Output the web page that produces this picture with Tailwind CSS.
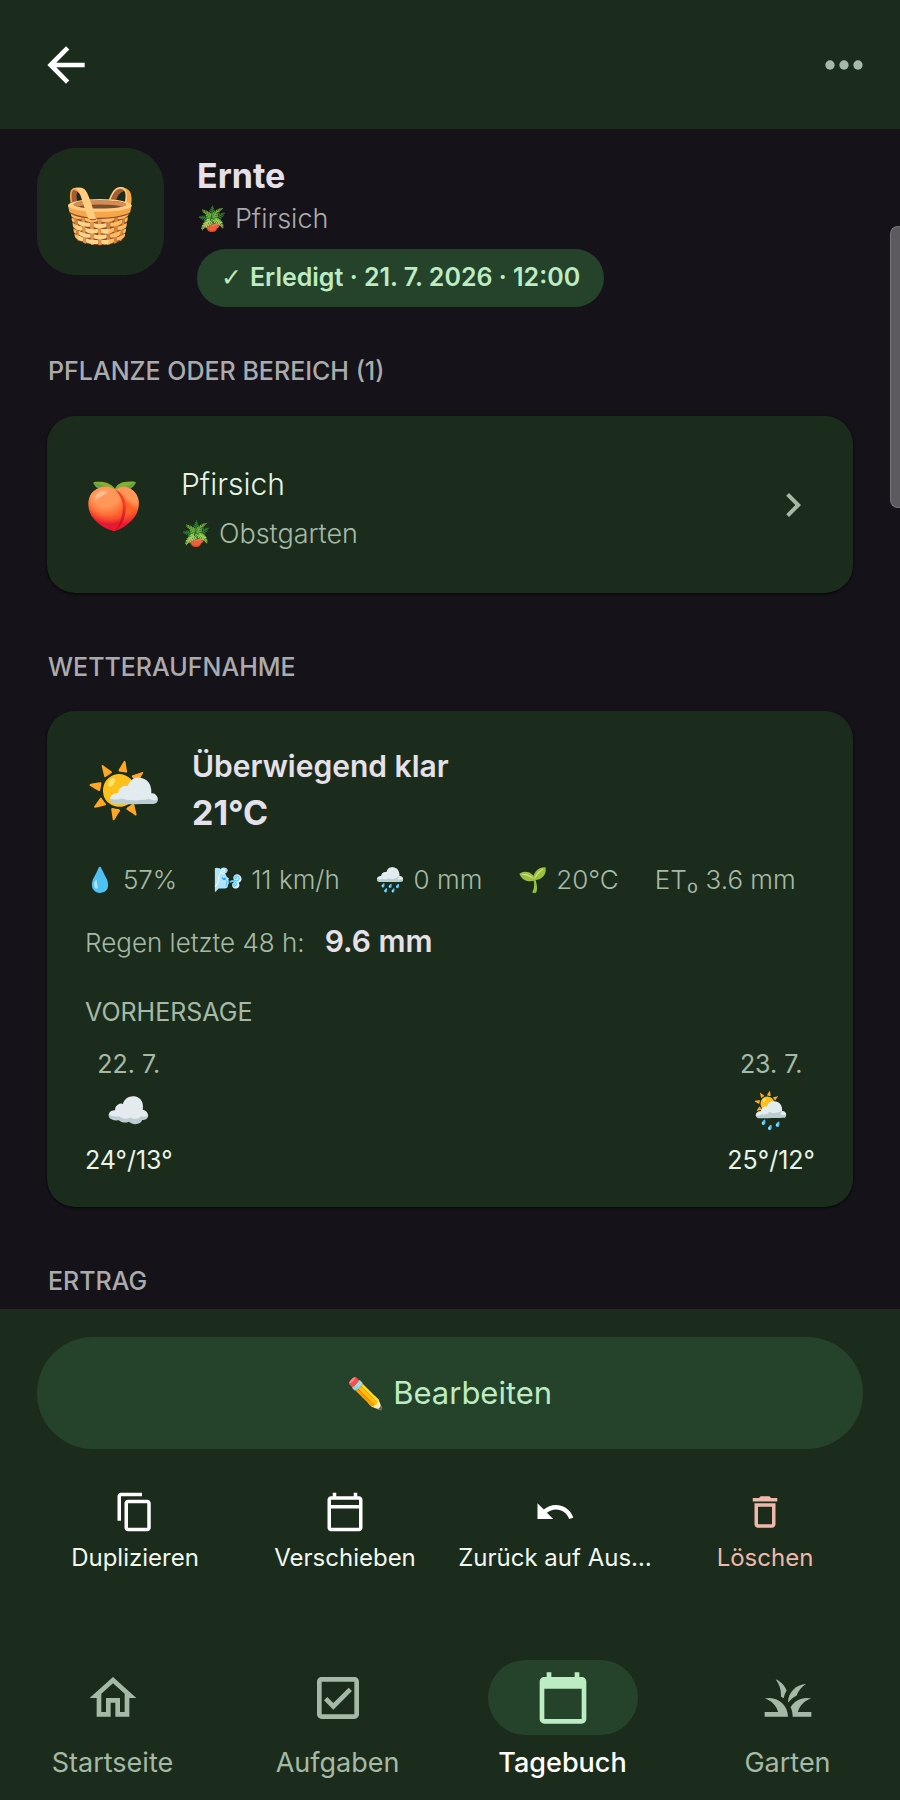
<!DOCTYPE html>
<html lang="de">
<head>
<meta charset="utf-8">
<meta name="viewport" content="width=device-width, initial-scale=1">
<title>Ernte – Pfirsich</title>
<script src="https://cdn.jsdelivr.net/npm/@tailwindcss/browser@4"></script>
</head>
<body class="flex h-screen flex-col overflow-hidden bg-[#16121a] font-['Inter','Noto_Color_Emoji',sans-serif] text-[#e7f3e7]">

<header class="flex h-[129px] shrink-0 items-center justify-between bg-[#1c2c1c] pl-[38px] pr-7">
  <button aria-label="Zurück" class="text-white"><svg class="size-14" viewBox="0 0 24 24" fill="currentColor"><path d="M20 11H7.83l5.59-5.59L12 4l-8 8 8 8 1.41-1.41L7.83 13H20v-2z"/></svg></button>
  <button aria-label="Mehr" class="text-[#a5baa6]"><svg class="size-14" viewBox="0 0 24 24" fill="currentColor"><circle cx="6" cy="12" r="2"/><circle cx="12" cy="12" r="2"/><circle cx="18" cy="12" r="2"/></svg></button>
</header>

<main class="relative min-h-0 flex-1 overflow-hidden">
  <div class="absolute right-0 top-[97px] h-[282px] w-[10px] rounded-l-lg border border-r-0 border-[#77757a] bg-[#5c5a5f]"></div>

  <section class="flex gap-[33px] px-[37px] pt-[19px]">
    <div class="flex size-[127px] shrink-0 items-center justify-center rounded-[38px] bg-[#1c2c1c] text-[58px] leading-none">🧺</div>
    <div class="flex flex-col items-start pt-1">
      <h1 class="text-[34px] font-bold leading-[48px] text-[#e6e0e9]">Ernte</h1>
      <p class="flex items-center gap-2 text-[27px] font-light leading-[38px] text-[#a9abac]"><span class="text-[24px]">🪴</span>Pfirsich</p>
      <p class="mt-[11px] flex h-[58px] items-center gap-2 rounded-full bg-[#25432b] px-6 text-[25px] font-semibold text-[#bdecc2]"><span class="font-['DejaVu_Sans',sans-serif]">✓</span>Erledigt · 21. 7. 2026 · 12:00</p>
    </div>
  </section>

  <section class="px-[47px] pt-[46px]">
    <h2 class="px-px text-[25px] font-medium leading-9 text-[#a9abac]">PFLANZE ODER BEREICH (1)</h2>
    <a href="#" class="mt-[27px] flex h-[177px] items-center rounded-[28px] bg-[#1c2c1c] pl-[38px] pr-9 shadow-sm shadow-black/60">
      <span class="w-24 text-[46px] leading-none">🍑</span>
      <span class="flex flex-1 flex-col pt-2">
        <span class="text-[30px] font-light leading-[50px]">Pfirsich</span>
        <span class="flex items-center gap-2 text-[27px] font-light leading-[50px] text-[#a5baa6]"><span class="text-[24px]">🪴</span>Obstgarten</span>
      </span>
      <svg class="size-12 text-[#a5baa6]" viewBox="0 0 24 24" fill="currentColor"><path d="M10 6L8.59 7.41 13.17 12l-4.58 4.59L10 18l6-6z"/></svg>
    </a>
  </section>

  <section class="px-[47px] pt-14">
    <h2 class="px-px text-[25px] font-medium leading-9 text-[#a9abac]">WETTERAUFNAHME</h2>
    <div class="mt-[26px] flex flex-col rounded-[28px] bg-[#1c2c1c] px-[38px] pb-[27px] pt-8 shadow-sm shadow-black/60">
      <div class="flex items-center">
        <span class="w-[107px] text-[62px] leading-none">🌤️</span>
        <div class="text-[#e6e0e9]">
          <p class="text-[30px] font-semibold leading-[46px]">Überwiegend klar</p>
          <p class="text-[34px] font-bold leading-[48px]">21°C</p>
        </div>
      </div>
      <ul class="mt-[21px] flex gap-9 text-[26px] font-light leading-[44px] text-[#a5baa6]">
        <li class="flex gap-2"><span class="text-[24px]">💧</span>57%</li>
        <li class="flex gap-2"><span class="text-[24px]">🌬️</span>11 km/h</li>
        <li class="flex gap-2"><span class="text-[24px]">🌧️</span>0 mm</li>
        <li class="flex gap-2"><span class="text-[24px]">🌱</span>20°C</li>
        <li>ET₀ 3.6 mm</li>
      </ul>
      <p class="mt-[17px] flex items-baseline gap-5 text-[26px] font-light leading-[44px] text-[#a5baa6]">Regen letzte 48 h: <strong class="text-[30px] font-semibold text-[#e6e0e9]">9.6 mm</strong></p>
      <h3 class="mt-[27px] text-[25px] leading-[40px] text-[#a5baa6]">VORHERSAGE</h3>
      <div class="mt-3 flex justify-between text-center text-[25px] leading-[40px]">
        <div class="flex flex-col"><span class="text-[#a5baa6]">22. 7.</span><span class="pb-1 text-[36px] leading-[52px]">☁️</span><span>24°/13°</span></div>
        <div class="flex flex-col"><span class="text-[#a5baa6]">23. 7.</span><span class="pb-1 text-[36px] leading-[52px]">🌦️</span><span>25°/12°</span></div>
      </div>
    </div>
  </section>

  <section class="px-[47px] pt-14">
    <h2 class="px-px text-[25px] font-medium leading-9 text-[#a9abac]">ERTRAG</h2>
  </section>
</main>

<footer class="shrink-0 bg-[#1c2c1c]">
  <div class="px-[37px] pt-7">
    <button class="flex h-28 w-full items-center justify-center gap-2 rounded-full bg-[#25432b] text-[31px] text-[#bdecc2]"><span class="text-[30px]">✏️</span>Bearbeiten</button>
  </div>
  <div class="grid grid-cols-4 px-[30px] pt-[42px] text-[24px] leading-8 text-[#f0f8f0]">
    <button class="flex min-w-0 flex-col items-center gap-[9px] px-2"><svg class="size-[42px] text-white" viewBox="0 0 24 24" fill="currentColor"><path d="M16 1H4c-1.1 0-2 .9-2 2v14h2V3h12V1zm3 4H8c-1.1 0-2 .9-2 2v14c0 1.1.9 2 2 2h11c1.1 0 2-.9 2-2V7c0-1.1-.9-2-2-2zm0 16H8V7h11v14z"/></svg>Duplizieren</button>
    <button class="flex min-w-0 flex-col items-center gap-[9px] px-2"><svg class="size-[42px] text-white" viewBox="0 0 24 24" fill="currentColor"><path d="M20 3h-1V1h-2v2H7V1H5v2H4c-1.1 0-2 .9-2 2v16c0 1.1.9 2 2 2h16c1.1 0 2-.9 2-2V5c0-1.1-.9-2-2-2zm0 18H4V10h16v11zm0-13H4V5h16v3z"/></svg>Verschieben</button>
    <button class="flex min-w-0 flex-col items-center gap-[9px] px-2"><svg class="size-[42px] text-white" viewBox="0 0 24 24" fill="currentColor"><path d="M12.5 8c-2.65 0-5.05.99-6.9 2.6L2 7v9h9l-3.62-3.62c1.39-1.16 3.16-1.88 5.12-1.88 3.54 0 6.55 2.31 7.6 5.5l2.37-.78C21.08 11.03 17.15 8 12.5 8z"/></svg><span class="whitespace-nowrap">Zurück auf Aus…</span></button>
    <button class="flex min-w-0 flex-col items-center gap-[9px] px-2 text-[#efb8ab]"><svg class="size-[42px]" viewBox="0 0 24 24" fill="currentColor"><path d="M6 19c0 1.1.9 2 2 2h8c1.1 0 2-.9 2-2V7H6v12zM8 9h8v10H8V9zm7.5-5l-1-1h-5l-1 1H5v2h14V4h-3.5z"/></svg>Löschen</button>
  </div>
  <nav class="grid grid-cols-4 pb-[19px] pt-[86px] text-[27px] leading-9 text-[#a5baa6]">
    <a href="#" class="flex flex-col items-center gap-[10px]"><span class="flex h-[75px] w-[150px] items-center justify-center rounded-full"><svg class="size-14" viewBox="0 0 24 24" fill="currentColor"><path d="M12 5.69l5 4.5V18h-2v-6H9v6H7v-7.81l5-4.5M12 3L2 12h3v8h6v-6h2v6h6v-8h3L12 3z"/></svg></span>Startseite</a>
    <a href="#" class="flex flex-col items-center gap-[10px]"><span class="flex h-[75px] w-[150px] items-center justify-center rounded-full"><svg class="size-14" viewBox="0 0 24 24" fill="currentColor"><path d="M19 3H5c-1.1 0-2 .9-2 2v14c0 1.1.9 2 2 2h14c1.1 0 2-.9 2-2V5c0-1.1-.9-2-2-2zm0 16H5V5h14v14zM17.99 9l-1.41-1.42-6.59 6.59-2.58-2.57-1.42 1.41 4 3.99z"/></svg></span>Aufgaben</a>
    <a href="#" aria-current="page" class="flex flex-col items-center gap-[10px] font-medium text-white"><span class="flex h-[75px] w-[150px] items-center justify-center rounded-full bg-[#25432b] text-[#bdecc2]"><svg class="size-14" viewBox="0 0 24 24" fill="currentColor"><path d="M20 3h-1V1h-2v2H7V1H5v2H4c-1.1 0-2 .9-2 2v16c0 1.1.9 2 2 2h16c1.1 0 2-.9 2-2V5c0-1.1-.9-2-2-2zm0 18H4V8h16v13z"/></svg></span>Tagebuch</a>
    <a href="#" class="flex flex-col items-center gap-[10px]"><span class="flex h-[75px] w-[150px] items-center justify-center rounded-full"><svg class="size-14" viewBox="0 0 24 24" fill="currentColor"><path d="M12 20H2v-2h5.75C7.02 15.19 4.81 12.99 2 12.26 2.64 12.1 3.31 12 4 12c4.42 0 8 3.58 8 8zM22 12.26c-.64-.16-1.31-.26-2-.26-2.93 0-5.48 1.58-6.88 3.93.29.66.53 1.35.67 2.07.13.65.21 1.32.21 2h8v-2h-5.75c.73-2.81 2.94-5.01 5.75-5.74zM15.64 11.02c.78-2.09 2.23-3.84 4.09-5C15.44 6.16 12 9.67 12 14v.02c.95-1.27 2.2-2.3 3.64-3zM11.42 8.85C10.58 6.66 8.88 4.89 6.7 4 8.14 5.86 9 8.18 9 10.71c0 .21-.03.41-.04.61.43.24.83.52 1.22.82.13-1.16.56-2.25 1.24-3.29z"/></svg></span>Garten</a>
  </nav>
</footer>
</body>
</html>
